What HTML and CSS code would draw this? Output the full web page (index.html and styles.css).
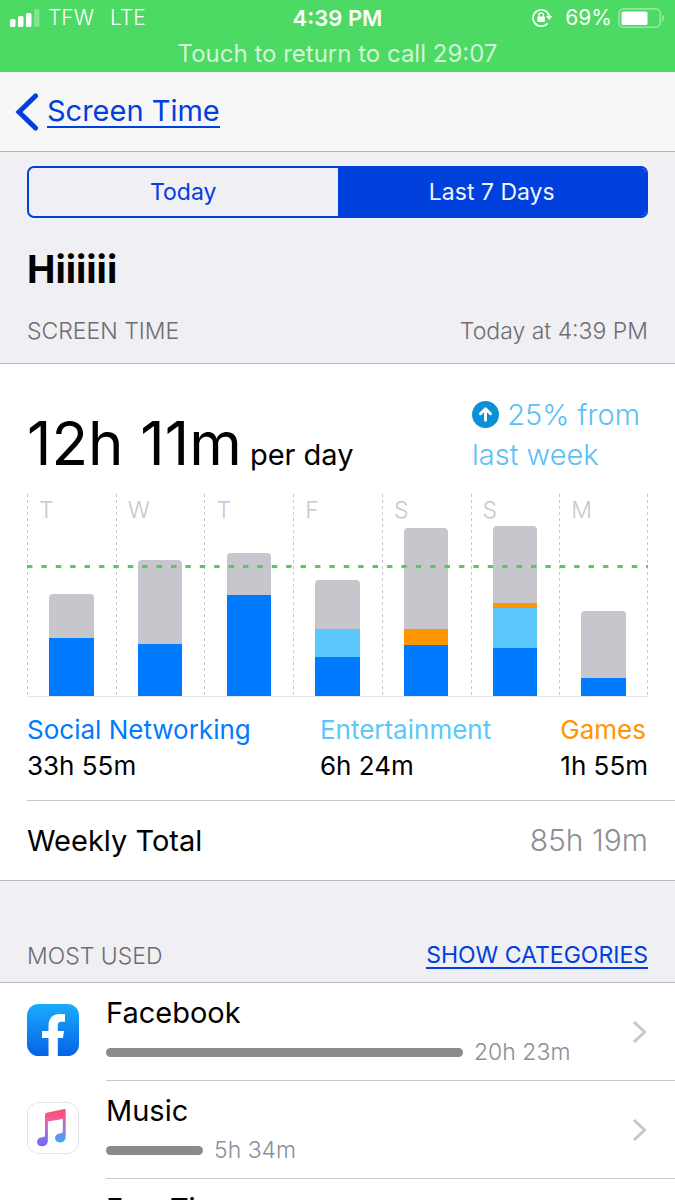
FILE: index.html
```html
<!DOCTYPE html>
<html lang="en">
<head>
<meta charset="utf-8">
<meta name="viewport" content="width=device-width, initial-scale=1">
<title>Screen Time</title>
<link rel="stylesheet" href="styles.css">
</head>
<body>
<div class="screen">
  <header class="status">
    <div class="status-row">
      <div class="status-left">
        <svg class="signal" width="30" height="18" viewBox="0 0 30 18" fill="#fff" aria-hidden="true">
          <rect x="0" y="10" width="5.500" height="8" rx="1.500"/>
          <rect x="8" y="7" width="5.500" height="11" rx="1.500"/>
          <rect x="16" y="4" width="5.500" height="14" rx="1.500"/>
          <rect x="24" y="0" width="5.500" height="18" rx="1.500" opacity=".3"/>
        </svg>
        <span>TFW</span>
        <span class="network">LTE</span>
      </div>
      <time class="clock">4:39 PM</time>
      <div class="status-right">
        <svg width="20" height="20" viewBox="0 0 20 20" aria-hidden="true">
          <path d="M15.600 15.200A8.200 8.200 0 1 1 17.200 8" fill="none" stroke="#fff" stroke-width="1.700"/>
          <path d="M14 8H20.200L17.200 12Z" fill="#fff"/>
          <rect x="5.400" y="8.600" width="7.400" height="5.400" rx=".7" fill="#fff"/>
          <path d="M6.800 9V7.200a2.300 2.300 0 0 1 4.600 0V9" fill="none" stroke="#fff" stroke-width="1.300"/>
        </svg>
        <span class="percent">69%</span>
        <svg width="47" height="20" viewBox="0 0 47 20" aria-hidden="true">
          <rect x=".9" y=".9" width="41.400" height="18.400" rx="4.500" fill="none" stroke="#fff" stroke-opacity=".4" stroke-width="1.600"/>
          <rect x="3.500" y="3.500" width="26" height="13.500" rx="1.500" fill="#fff"/>
          <path d="M44.500 6.500q3 3.700 0 7.400z" fill="#fff" fill-opacity=".5"/>
        </svg>
      </div>
    </div>
    <button class="call" type="button">Touch to return to call 29:07</button>
  </header>

  <nav class="nav">
    <a class="back" href="#">
      <svg width="24" height="40" viewBox="0 0 24 40" aria-hidden="true"><path d="M20.500 4L4 20 20.500 36" fill="none" stroke="#0040dd" stroke-width="5" stroke-linecap="round" stroke-linejoin="miter"/></svg>
      <span class="underlined">Screen Time</span>
    </a>
  </nav>

  <main class="content">
    <div class="segments">
      <button class="segment" type="button" aria-pressed="false">Today</button>
      <button class="segment selected" type="button" aria-pressed="true">Last 7 Days</button>
    </div>
    <h1 class="device">Hiiiiii</h1>
    <div class="section-head">
      <h2 class="label">SCREEN TIME</h2>
      <span class="label">Today at 4:39 PM</span>
    </div>

    <section class="card">
      <div class="summary">
        <p class="average"><span class="average-value">12h 11m</span> per day</p>
        <p class="change">
          <svg class="up" width="27" height="27" viewBox="0 0 28 28" aria-hidden="true"><circle cx="14" cy="14" r="14" fill="#0a90d6"/><path d="M14 20V8.500M8.800 13.300L14 8.100l5.200 5.200" fill="none" stroke="#fff" stroke-width="3" stroke-linecap="round" stroke-linejoin="round"/></svg>
          25% from<br>last week</p>
      </div>

      <div class="chart">
        <div class="day"><span class="day-name">T</span><div class="bar"><i class="other" style="height:44px"></i><i class="social" style="height:58px"></i></div></div>
        <div class="day"><span class="day-name">W</span><div class="bar"><i class="other" style="height:84px"></i><i class="social" style="height:52px"></i></div></div>
        <div class="day"><span class="day-name">T</span><div class="bar"><i class="other" style="height:42px"></i><i class="social" style="height:101px"></i></div></div>
        <div class="day"><span class="day-name">F</span><div class="bar"><i class="other" style="height:49px"></i><i class="fun" style="height:28px"></i><i class="social" style="height:39px"></i></div></div>
        <div class="day"><span class="day-name">S</span><div class="bar"><i class="other" style="height:101px"></i><i class="games" style="height:16px"></i><i class="social" style="height:51px"></i></div></div>
        <div class="day"><span class="day-name">S</span><div class="bar"><i class="other" style="height:77px"></i><i class="games" style="height:5px"></i><i class="fun" style="height:40px"></i><i class="social" style="height:48px"></i></div></div>
        <div class="day"><span class="day-name">M</span><div class="bar"><i class="other" style="height:67px"></i><i class="social" style="height:18px"></i></div></div>
        <svg class="mean-line" viewBox="0 0 621 3" preserveAspectRatio="none" aria-hidden="true"><path d="M0 1.500H621" stroke="#4bcf5f" stroke-width="3" stroke-dasharray="5.400 9"/></svg>
      </div>

      <dl class="legend">
        <div><dt class="social-text">Social Networking</dt><dd>33h 55m</dd></div>
        <div><dt class="fun-text">Entertainment</dt><dd>6h 24m</dd></div>
        <div><dt class="games-text">Games</dt><dd>1h 55m</dd></div>
      </dl>
      <div class="total"><span>Weekly Total</span><span class="total-value">85h 19m</span></div>
    </section>

    <div class="section-head most-used">
      <h2 class="label">MOST USED</h2>
      <button class="toggle" type="button">SHOW CATEGORIES</button>
    </div>

    <ul class="apps">
      <li><a class="app" href="#">
        <svg class="app-icon" width="52" height="52" viewBox="0 0 52 52" aria-hidden="true">
          <defs><linearGradient id="fb" x1="0" y1="0" x2="0" y2="1"><stop offset="0" stop-color="#19acfd"/><stop offset="1" stop-color="#0562e5"/></linearGradient></defs>
          <rect width="52" height="52" rx="11.500" fill="url(#fb)"/>
          <path d="M21.500 52V34H15v-7h6.500v-5.200C21.500 14.300 25.500 10 33 10h5v7.800h-3.200c-3.200 0-4 1.300-4 3.900V27H37l-1 7h-5.200v18z" fill="#fff"/>
        </svg>
        <span class="app-body">
          <span class="app-text"><span class="app-name">Facebook</span><span class="usage"><i class="usage-bar" style="width:357px"></i>20h 23m</span></span>
          <svg width="16" height="26" viewBox="0 0 16 26" aria-hidden="true"><path d="M2 3L12.500 13 2 23" fill="none" stroke="#c7c7cc" stroke-width="3"/></svg>
        </span>
      </a></li>
      <li><a class="app" href="#">
        <svg class="app-icon" width="52" height="52" viewBox="0 0 52 52" aria-hidden="true">
          <defs><linearGradient id="mu" gradientUnits="userSpaceOnUse" x1="28" y1="7" x2="26" y2="44"><stop offset="0" stop-color="#fb4f6c"/><stop offset=".35" stop-color="#f0609c"/><stop offset=".65" stop-color="#a568e4"/><stop offset="1" stop-color="#6f6cf8"/></linearGradient>
          <linearGradient id="mr" gradientUnits="userSpaceOnUse" x1="34" y1="15" x2="34" y2="40"><stop offset="0" stop-color="#e0609b"/><stop offset=".45" stop-color="#9a7bd4"/><stop offset="1" stop-color="#3ea6f8"/></linearGradient></defs>
          <rect x=".5" y=".5" width="51" height="51" rx="11.500" fill="#fff" stroke="#e4e4e6"/>
          <path d="M35.800 16h2.900v18.500c0 3.800-2.300 6-5.600 6-3 0-5.100-1.700-5.100-4.400 0-2.600 1.900-4.100 4.600-4.600 2.300-.4 3.200-.5 3.200-2.500z" fill="url(#mr)"/>
          <path d="M18 12.700q0-1.500 1.500-1.900L37.300 7q1.400-.2 1.400 1.200v8.300L20.900 19.600v18.700c0 3.800-2.300 6-5.600 6-3 0-5.200-1.700-5.200-4.400 0-2.600 1.900-4.100 4.700-4.600 2.300-.4 3.200-.6 3.200-2.600z" fill="url(#mu)"/>
        </svg>
        <span class="app-body">
          <span class="app-text"><span class="app-name">Music</span><span class="usage"><i class="usage-bar" style="width:97px"></i>5h 34m</span></span>
          <svg width="16" height="26" viewBox="0 0 16 26" aria-hidden="true"><path d="M2 3L12.500 13 2 23" fill="none" stroke="#c7c7cc" stroke-width="3"/></svg>
        </span>
      </a></li>
      <li><a class="app" href="#">
        <span class="app-icon"></span>
        <span class="app-body"><span class="app-text"><span class="app-name">FaceTime</span></span></span>
      </a></li>
    </ul>
  </main>
</div>
</body>
</html>
```
FILE: styles.css
```css
* { box-sizing: border-box; }

body {
  margin: 0;
  background: #efeff4;
  color: #000;
  font-family: Inter, "Liberation Sans", sans-serif;
}

h1, h2, p, dl, dd, ul { margin: 0; padding: 0; }
ul { list-style: none; }
button { border: 0; padding: 0; background: none; font: inherit; color: inherit; }
a { color: inherit; text-decoration: none; }
svg { display: block; flex: none; }
i { display: block; }

.screen { display: flex; flex-direction: column; height: 100vh; }

.status {
  display: flex;
  flex-direction: column;
  background: #4cd964;
  color: #fff;
  font-size: 22px;
  line-height: 36px;
}
.status-row { display: grid; grid-template-columns: 1fr auto 1fr; padding: 0 10px; }
.status-left, .status-right { display: flex; align-items: center; font-size: 21px; }
.status-left { font-weight: 300; }
.signal { margin-right: 8px; }
.network { margin-left: 16px; }
.status-right { justify-content: flex-end; }
.percent { margin: 0 6px 0 13px; }
.clock { font-weight: 600; }
.call { color: #d2f5d8; line-height: 36px; font-size: 24px; }

.nav {
  display: flex;
  align-items: center;
  height: 80px;
  padding: 0 15px;
  background: #f7f7f7;
  border-bottom: 1px solid #b2b2b6;
}
.back { display: flex; align-items: center; gap: 8px; color: #0040dd; font-size: 29px; line-height: 30px; }
.underlined { border-bottom: 2px solid #0040dd; }

.content { flex: 1; overflow-y: auto; scrollbar-width: none; }

.segments {
  display: flex;
  height: 52px;
  margin: 14px 27px 0;
  border: 2px solid #0040dd;
  border-radius: 7px;
  overflow: hidden;
}
.segment { flex: 1; color: #0040dd; font-size: 23px; }
.selected { background: #0040dd; color: #f0f4ff; }

.device { padding: 27px 27px 0; font-size: 38px; line-height: 48px; font-weight: 700; }

.section-head {
  display: flex;
  justify-content: space-between;
  align-items: center;
  padding: 22px 27px 16px;
  border-bottom: 1px solid #b9b9c0;
  line-height: 32px;
}
.label { color: #6d6d72; font-size: 23px; font-weight: 300; }

.card { background: #fff; }
.summary { display: flex; justify-content: space-between; align-items: flex-start; padding: 31px 35px 0 27px; }
.average { padding-top: 12px; font-size: 29px; line-height: 72px; }
.average-value { font-size: 60px; }
.change { color: #5ac0f5; font-size: 29px; line-height: 40px; font-weight: 300; }
.up { display: inline-block; vertical-align: -3px; }

.chart {
  position: relative;
  display: flex;
  height: 203px;
  margin: 3px 27px 0;
  border-bottom: 1px solid #e5e5ea;
  background: repeating-linear-gradient(#c7c7cc 0 3px, transparent 3px 6px) right / 1px 100% no-repeat;
}
.day {
  flex: 1;
  display: flex;
  flex-direction: column;
  justify-content: space-between;
  background: repeating-linear-gradient(#c7c7cc 0 3px, transparent 3px 6px) left / 1px 100% no-repeat;
}
.day-name { height: 32px; padding-left: 12px; color: #c7c7cc; font-size: 23px; line-height: 32px; font-weight: 300; }
.bar { width: 50%; margin: -32px auto 0; border-radius: 4px 4px 0 0; overflow: hidden; }
.other { background: #c7c6cd; }
.social { background: #007aff; }
.fun { background: #5ac8fa; }
.games { background: #ff9500; }
.mean-line { position: absolute; left: 0; top: 71px; width: 100%; height: 3px; }

.legend { display: flex; justify-content: space-between; padding: 15px 27px 16px; font-size: 26px; line-height: 36px; }
.social-text { color: #007aff; }
.fun-text { color: #5ac8fa; }
.games-text { color: #ff9500; }

.total {
  display: flex;
  justify-content: space-between;
  margin-left: 27px;
  padding-right: 27px;
  border-top: 1px solid #c8c7cc;
  font-size: 29px;
  line-height: 79px;
}
.total-value { color: #8e8e93; font-size: 30px; font-weight: 300; }

.most-used { padding-top: 59px; padding-bottom: 10px; border-top: 1px solid #b9b9c0; }
.toggle { border-bottom: 2px solid #0040dd; color: #0040dd; font-size: 23px; line-height: 24px; }

.apps { background: #fff; }
.app { display: flex; align-items: center; height: 98px; padding-left: 27px; }
.app-icon { width: 52px; margin: 0 27px 4px 0; }
.app-body {
  flex: 1;
  align-self: stretch;
  display: flex;
  align-items: center;
  justify-content: space-between;
  padding-right: 27px;
  border-bottom: 1px solid #c8c7cc;
}
.app-text { align-self: stretch; display: flex; flex-direction: column; padding-top: 11px; }
.app-name { font-size: 29px; line-height: 38px; }
.usage { display: flex; align-items: center; gap: 11px; color: #8e8e93; font-size: 23px; line-height: 40px; font-weight: 300; }
.usage-bar { height: 9px; border-radius: 5px; background: #8a8a8e; }
```
